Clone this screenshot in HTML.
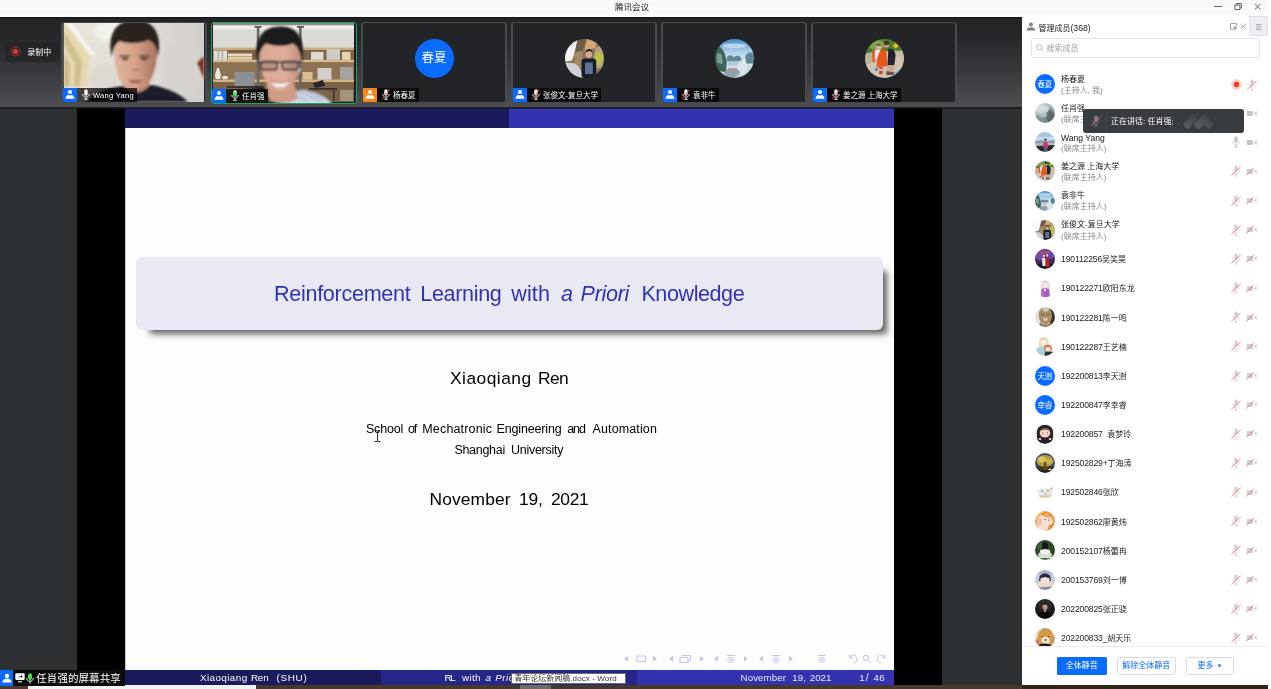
<!DOCTYPE html>
<html lang="zh-CN">
<head>
<meta charset="utf-8">
<title>腾讯会议</title>
<style>
*{box-sizing:border-box;margin:0;padding:0}
html,body{width:1271px;height:689px;overflow:hidden;background:#2d3033}
body{position:relative;font-family:"Liberation Sans","Noto Sans CJK SC",sans-serif;color:#000;font-size:8px}
#root{position:absolute;left:0;top:0;width:1271px;height:689px;overflow:hidden;will-change:transform}
.abs{position:absolute}
svg{display:block;overflow:visible}
#titlebar{left:0;top:0;width:1268px;height:17px;background:#f9f9f9;border-bottom:2px solid #fff}
#titlebar .t{position:absolute;left:0;width:1264px;top:1px;text-align:center;font-size:8.5px;line-height:12px;color:#222}
#strip{left:0;top:17px;width:1022px;height:90px;background:linear-gradient(#0e0f11 0,#222426 2%,#25272a 20%,#37393c 60%,#4c4e51 100%)}
#main{left:0;top:107px;width:1022px;height:578px;background:#2d3033}
#share{left:77px;top:108px;width:865px;height:577px;background:#000}
#slide{left:125px;top:108px;width:769px;height:577px;background:#fdfdfd;overflow:hidden}
#desk{left:0;top:685px;width:1271px;height:4px;background:#2a211b}
#sep{display:none}
#panel{left:1022px;top:16px;width:249px;height:669px;background:#fff;overflow:hidden}
.tile{position:absolute;top:22px;width:146px;height:82px;border:solid #484a4d;border-width:1px 2px 2px 2px;border-radius:3px;background:#232427;overflow:hidden}
.tile .lab{position:absolute;left:0;bottom:0;height:14px;display:flex}
.tile .ico{width:14px;height:14px;background:#0a6cff;position:relative;flex:none}
.tile .nm{height:14px;background:rgba(0,0,0,.72);color:#fff;font-size:7.5px;line-height:14px;padding:0 3px 0 4.500px;display:flex;align-items:center;white-space:nowrap}
.tile .nm svg{margin-right:3.500px;position:relative;top:-0.600px}
.tile .nm span{position:relative;top:1.300px}
.tile .av{position:absolute;left:51.500px;top:15.500px;width:39px;height:39px;border-radius:50%;overflow:hidden}
.w{position:absolute;white-space:pre;line-height:1}
</style>
</head>
<body>
<div id="root">
<svg class="abs" width="0" height="0" style="left:0;top:0"><defs><filter id="avb" x="-5%" y="-5%" width="110%" height="110%"><feGaussianBlur stdDeviation="0.7"/></filter><filter id="avb2" x="-5%" y="-5%" width="110%" height="110%"><feGaussianBlur stdDeviation="1.2"/></filter></defs></svg><div id="titlebar" class="abs"><div class="t">腾讯会议</div><svg class="abs" style="left:1210px;top:0" width="58" height="15" viewBox="0 0 58 15"><path d="M4 6.500 H12" stroke="#555" stroke-width="0.9"/><path d="M24.900 5 H29.900 V9.600 H24.900 Z" stroke="#555" stroke-width="0.9" fill="none"/><path d="M26.400 5 V3.500 H31.400 V8.100 H29.900" stroke="#555" stroke-width="0.9" fill="none"/><path d="M44.900 3.700 L50.700 9.600 M50.700 3.700 L44.900 9.600" stroke="#555" stroke-width="0.9"/></svg></div><div id="strip" class="abs"></div><div id="main" class="abs"></div><div id="share" class="abs"></div><div class="abs" style="left:5px;top:42px;width:55px;height:20px;border-radius:3px;background:rgba(30,31,33,.55)"></div><svg class="abs" style="left:10px;top:46px" width="11" height="11" viewBox="0 0 11 11"><circle cx="5.5" cy="5.5" r="4.5" fill="none" stroke="#b8352d" stroke-width="0.8"/><circle cx="5.5" cy="5.5" r="2.7" fill="#cf3a31"/></svg><div class="w" style="left:27.300px;top:49px;font-size:8px;color:#fff">录制中</div><div class="tile" style="left:61px;"><svg class="abs" style="left:0.500px;top:0" width="140" height="79" viewBox="0 0 140 79" preserveAspectRatio="none">
<defs><filter id="b1" x="-10%" y="-10%" width="120%" height="120%"><feGaussianBlur stdDeviation="0.9"/></filter><filter id="b1b" x="-20%" y="-20%" width="140%" height="140%"><feGaussianBlur stdDeviation="2.5"/></filter>
<linearGradient id="w1" x1="0" x2="1"><stop offset="0" stop-color="#e9e5da"/><stop offset="0.45" stop-color="#e2dfda"/><stop offset="1" stop-color="#d2cfca"/></linearGradient>
<linearGradient id="sk1" x1="0" x2="1"><stop offset="0" stop-color="#e2b8a0"/><stop offset="0.5" stop-color="#d3a088"/><stop offset="1" stop-color="#a8735f"/></linearGradient></defs>
<rect width="140" height="79" fill="url(#w1)"/>
<g filter="url(#b1b)"><ellipse cx="52" cy="8" rx="22" ry="12" fill="#f4f3ee"/><ellipse cx="118" cy="44" rx="20" ry="30" fill="#d6d3ce"/><ellipse cx="40" cy="56" rx="14" ry="14" fill="#dcd8d2"/></g>
<g filter="url(#b1)">
<path d="M0 0 H1 L27 33 L25 36 L24 64 L0 64 Z" fill="#e6d8b2"/><path d="M1 0 H8 L31 32 L27 33 Z" fill="#f6f5f0"/>
<path d="M0 8 L18 38 L16 64 L10 64 L11 40 L0 22 Z" fill="#d2bf90"/>
<path d="M0 30 L6 42 L5 64 L0 64 Z" fill="#cdb98a"/>
<path d="M22 79 C30 70 44 65 58 63 L88 62 C104 65 118 72 124 79 Z" fill="#1a1f2a"/>
<path d="M58 62 L62 54 H82 L86 62 C78 72 66 72 58 62 Z" fill="#b98671"/>
<path d="M50 30 C46 10 56 -2 71 -2 C88 -2 96 10 93 32 C92 46 88 57 82 63 C76 68 66 68 60 63 C54 57 51 46 50 30 Z" fill="url(#sk1)"/>
<path d="M48 34 C43 14 50 -3 71 -3 C92 -3 98 14 94 34 C93 24 90 19 84 17 C76 21 62 21 56 18 C51 21 49 26 48 34 Z" fill="#29211e"/>
<path d="M55 33 H66 M75 33 H86" stroke="#3a2a25" stroke-width="1.300"/>
<ellipse cx="61" cy="36" rx="3.500" ry="1.200" fill="#3d2c28"/><ellipse cx="80" cy="36" rx="3.500" ry="1.200" fill="#3d2c28"/>
<path d="M68 47 H74" stroke="#9a6b58" stroke-width="1.200"/>
<ellipse cx="71" cy="58.500" rx="6.500" ry="1.600" fill="#a25e5a"/>
<path d="M140 33 L133 40 L136 46 L140 56 Z" fill="#7d3328"/>
</g></svg><div class="lab"><div class="ico" style="background:#0a6cff"><svg class="abs" style="left:2px;top:1.400px" width="10" height="10" viewBox="0 0 10 10"><circle cx="5" cy="3" r="2.100" fill="#fff"/><path d="M0.500 9.700 C0.700 7.200 2.300 6.300 3.500 5.700 L5 6.700 L6.500 5.700 C7.700 6.300 9.300 7.200 9.500 9.700 Z" fill="#fff"/></svg></div><div class="nm"><svg width="8" height="11" viewBox="0 0 8 11"><rect x="2.3" y="0.3" width="3.4" height="6.4" rx="1.7" fill="#fff"/><path d="M0.8 5 C0.8 9.2 7.2 9.2 7.2 5" fill="none" stroke="#fff" stroke-width="0.9"/><path d="M4 8.2 V10.2 M2.3 10.3 H5.7" stroke="#fff" stroke-width="0.9" fill="none"/></svg><span style="letter-spacing:0.3px">Wang Yang</span></div></div></div><div class="tile" style="left:211px;border-color:#1aa65e;border-width:1px;padding:0 1px 1px 1px;background:#1c1d1f;"><svg class="abs" style="left:0.500px;top:0" width="141" height="79" viewBox="0 0 141 79" preserveAspectRatio="none">
<defs><filter id="b2" x="-10%" y="-10%" width="120%" height="120%"><feGaussianBlur stdDeviation="0.8"/></filter><filter id="b2s" x="-10%" y="-10%" width="120%" height="120%"><feGaussianBlur stdDeviation="0.45"/></filter>
<linearGradient id="sk2" x1="0" x2="1"><stop offset="0" stop-color="#d9a893"/><stop offset="0.6" stop-color="#dfae9b"/><stop offset="1" stop-color="#c48e7c"/></linearGradient></defs>
<rect width="141" height="79" fill="#b19a78"/>
<g filter="url(#b2s)">
<rect width="141" height="25" fill="#dcdad5"/><rect width="141" height="2.500" fill="#8f8b85"/><rect y="2.500" width="141" height="4" fill="#f0eeea"/>
<rect x="0" y="24.500" width="141" height="2.500" fill="#c9ab7f"/>
<rect x="0" y="27" width="141" height="10" fill="#7d6346"/>
<rect x="0" y="36.800" width="141" height="2.400" fill="#d6ba8e"/>
<rect x="0" y="39.200" width="141" height="17.500" fill="#8d7253"/>
<rect x="0" y="56.700" width="141" height="2.300" fill="#cfb288"/>
<rect x="0" y="59" width="141" height="20" fill="#7c6447"/>
<rect x="43.800" y="3.500" width="2.600" height="76" fill="#6b6865"/><rect x="86" y="3.500" width="2.600" height="76" fill="#6b6865"/>
<rect x="41.500" y="3" width="7" height="1.800" fill="#5e5b58"/><rect x="84" y="3" width="7" height="1.800" fill="#5e5b58"/>
<rect x="0.500" y="27.500" width="4.300" height="9.500" fill="#dedcd6"/><rect x="5.200" y="27.500" width="4.300" height="9.500" fill="#d5d3cd"/><rect x="9.900" y="27.500" width="4.300" height="9.500" fill="#dedcd6"/>
<rect x="15" y="30.500" width="24" height="3" fill="#ead9b6"/><rect x="15" y="33.800" width="24" height="3" fill="#dfcca6"/>
<rect x="98" y="28.800" width="12.500" height="8" fill="#dedbd4"/><rect x="113.500" y="26.200" width="13.500" height="10.600" fill="#d0cdc7"/><rect x="129" y="28.800" width="8.500" height="8" fill="#e3d2ac"/>
<rect x="104.500" y="45" width="14" height="11.700" fill="#d3d0ca"/><rect x="127" y="44" width="13" height="12.700" fill="#a6a39e"/><rect x="89.500" y="49" width="10" height="7.700" fill="#d8c08f"/>
<rect x="21.500" y="49" width="20" height="14" fill="#8c9095"/>
<path d="M3 56 C1 52 3 50 4 45 H6 C7 50 9 52 7 56 Z" fill="#efebe2"/><ellipse cx="12" cy="54.500" rx="3" ry="1.800" fill="#ebe7dd"/>
<rect x="96" y="65" width="28" height="1.800" fill="#34312f"/><path d="M100 60 L110 57 L112 63 L102 65 Z" fill="#262525"/><rect x="120" y="66" width="1.500" height="12" fill="#34312f"/>
<rect x="127" y="67" width="13" height="11" fill="#a39680"/>
<rect x="14" y="63" width="36" height="2" fill="#3a3633"/>
</g>
<g filter="url(#b2)">
<g transform="translate(67 40.5) scale(0.93 0.95) translate(-66.6 -40)">
<path d="M66 84 C70 74 80 68 92 68 C108 70 118 76 124 84 Z" fill="#cdd5e6"/>
<path d="M84 68 L110 79 M92 67 L114 77 M78 72 L96 79" stroke="#8d9cc0" stroke-width="1" fill="none"/>
<path d="M12 79 C16 70 34 65 48 64 L62 79 Z" fill="#202226"/>
<path d="M52 62 H82 L86 76 C76 84 60 84 54 76 Z" fill="#cf9c88"/>
<path d="M45 34 C42 12 52 2 67 2 C82 2 92 12 89 36 C88 50 84 60 78 65 C72 70 62 70 56 65 C50 60 46 50 45 34 Z" fill="url(#sk2)"/>
<path d="M43 40 C37 14 48 1 67 1 C86 1 95 14 90 42 C89 30 87 22 80 19 C72 23 58 22 52 19 C46 23 44 30 43 40 Z" fill="#1f1b1a"/>
<path d="M44.500 38.500 H88.500" stroke="#20222a" stroke-width="2"/>
<rect x="46" y="38" width="17.500" height="8.500" rx="2.200" fill="rgba(90,80,90,.25)" stroke="#20222a" stroke-width="1.700"/><rect x="69" y="38" width="17.500" height="8.500" rx="2.200" fill="rgba(90,80,90,.25)" stroke="#20222a" stroke-width="1.700"/>
<path d="M57 59 C62 61.500 72 61.500 77 58 C74 67 60 67.500 57 59 Z" fill="#f6f2ef"/>
<path d="M56 58.500 C62 61 72 61 78 57.500" stroke="#b0605c" stroke-width="1.100" fill="none"/>
<ellipse cx="87.500" cy="47" rx="1" ry="2.200" fill="#f2f2f2"/>
</g></g></svg><div class="lab"><div class="ico" style="background:#0a6cff"><svg class="abs" style="left:2px;top:1.400px" width="10" height="10" viewBox="0 0 10 10"><circle cx="5" cy="3" r="2.100" fill="#fff"/><path d="M0.500 9.700 C0.700 7.200 2.300 6.300 3.500 5.700 L5 6.700 L6.500 5.700 C7.700 6.300 9.300 7.200 9.500 9.700 Z" fill="#fff"/></svg></div><div class="nm"><svg width="8" height="11" viewBox="0 0 8 11"><rect x="2.3" y="0.3" width="3.4" height="6.4" rx="1.7" fill="#fff"/><rect x="2.3" y="2.2" width="3.4" height="4.5" rx="1.6" fill="#2fe04a"/><path d="M0.8 5 C0.8 9.2 7.2 9.2 7.2 5" fill="none" stroke="#fff" stroke-width="0.9"/><path d="M4 8.2 V10.2 M2.3 10.3 H5.7" stroke="#fff" stroke-width="0.9" fill="none"/></svg><span style="letter-spacing:0px">任肖强</span></div></div></div><div class="tile" style="left:361px;"><div class="av" style="background:#0a6cff;color:#fff;font-size:12.5px;line-height:39px;text-align:center">春夏</div><div class="lab"><div class="ico" style="background:#fb8618"><svg class="abs" style="left:2px;top:1.400px" width="10" height="10" viewBox="0 0 10 10"><circle cx="5" cy="3" r="2.100" fill="#fff"/><path d="M0.500 9.700 C0.700 7.200 2.300 6.300 3.500 5.700 L5 6.700 L6.500 5.700 C7.700 6.300 9.300 7.200 9.500 9.700 Z" fill="#fff"/></svg></div><div class="nm"><svg width="8" height="11" viewBox="0 0 8 11"><rect x="2.3" y="0.3" width="3.4" height="6.4" rx="1.7" fill="#fff"/><path d="M0.8 5 C0.8 9.2 7.2 9.2 7.2 5" fill="none" stroke="#fff" stroke-width="0.9"/><path d="M4 8.2 V10.2 M2.3 10.3 H5.7" stroke="#fff" stroke-width="0.9" fill="none"/><path d="M0.3 10.2 L7.7 0.6" stroke="#e8453c" stroke-width="1"/></svg><span style="letter-spacing:0px">杨春夏</span></div></div></div><div class="tile" style="left:511px;"><div class="av"><svg width="39" height="39" viewBox="0 0 40 40"><g filter="url(#avb)"><rect width="40" height="40" fill="#8c765c"/><path d="M0 0 H13 L9 17 L7 22 L0 23 Z" fill="#f3f5f7"/><path d="M13 0 H22 L18 12 L10 16 Z" fill="#6e5a48"/><path d="M22 0 H34 L31 9 L20 13 Z" fill="#d2a876"/><path d="M31 9 L40 6 V30 H30 Z" fill="#b9a184"/><ellipse cx="34" cy="20" rx="4.500" ry="7" fill="#b9c246"/><path d="M0 24 L12 25 L21 40 H0 Z" fill="#cfd1d4"/><path d="M9 14 L18 12 L17 30 L11 26 Z" fill="#a58a66"/><rect x="17" y="20" width="15" height="20" rx="3" fill="#141a29"/><rect x="20.500" y="24" width="8" height="12" fill="#5f7190"/><ellipse cx="24.500" cy="15.500" rx="3.200" ry="4" fill="#d6a78a"/><path d="M21 14 C21 9 28 9 28.500 14 C27 12 23 12 21 14 Z" fill="#1c1a1a"/></g></svg></div><div class="lab"><div class="ico" style="background:#0a6cff"><svg class="abs" style="left:2px;top:1.400px" width="10" height="10" viewBox="0 0 10 10"><circle cx="5" cy="3" r="2.100" fill="#fff"/><path d="M0.500 9.700 C0.700 7.200 2.300 6.300 3.500 5.700 L5 6.700 L6.500 5.700 C7.700 6.300 9.300 7.200 9.500 9.700 Z" fill="#fff"/></svg></div><div class="nm"><svg width="8" height="11" viewBox="0 0 8 11"><rect x="2.3" y="0.3" width="3.4" height="6.4" rx="1.7" fill="#fff"/><path d="M0.8 5 C0.8 9.2 7.2 9.2 7.2 5" fill="none" stroke="#fff" stroke-width="0.9"/><path d="M4 8.2 V10.2 M2.3 10.3 H5.7" stroke="#fff" stroke-width="0.9" fill="none"/><path d="M0.3 10.2 L7.7 0.6" stroke="#e8453c" stroke-width="1"/></svg><span style="letter-spacing:0px">张俊文-复旦大学</span></div></div></div><div class="tile" style="left:661px;"><div class="av"><svg width="39" height="39" viewBox="0 0 40 40"><g filter="url(#avb)"><defs><linearGradient id="g2y" x1="0" x2="0" y1="0" y2="1"><stop offset="0" stop-color="#3f8ccb"/><stop offset="0.3" stop-color="#a9cde6"/><stop offset="0.55" stop-color="#dbe8f0"/><stop offset="1" stop-color="#b5c9d6"/></linearGradient></defs><rect width="40" height="40" fill="url(#g2y)"/><ellipse cx="20" cy="7" rx="12" ry="2.500" fill="#d4e6f3" opacity=".7"/><path d="M0 9 L5 8 C10 12 12 20 12 26 L11 34 L0 32 Z" fill="#3d6656"/><path d="M2 14 L7 16 L8 26 L2 24 Z" fill="#7f9a92"/><path d="M12 19 C14 16 18 16 19 19 C21 17 25 16 27 20 L28 23 H12 Z" fill="#64879a"/><path d="M31 18 C33 13 38 13 40 16 V25 H32 Z" fill="#5f8698"/><path d="M12 23 H28 L26 27 H14 Z" fill="#a9c2d0" opacity=".8"/><ellipse cx="28" cy="29" rx="5" ry="8" fill="#e6eff5" opacity=".6"/><path d="M9 34 L14 30 L22 30 L26 34 L20 40 H12 Z" fill="#8fa3ad"/><path d="M14 30 H22 L21 32 H15 Z" fill="#c98f8a"/></g></svg></div><div class="lab"><div class="ico" style="background:#0a6cff"><svg class="abs" style="left:2px;top:1.400px" width="10" height="10" viewBox="0 0 10 10"><circle cx="5" cy="3" r="2.100" fill="#fff"/><path d="M0.500 9.700 C0.700 7.200 2.300 6.300 3.500 5.700 L5 6.700 L6.500 5.700 C7.700 6.300 9.300 7.200 9.500 9.700 Z" fill="#fff"/></svg></div><div class="nm"><svg width="8" height="11" viewBox="0 0 8 11"><rect x="2.3" y="0.3" width="3.4" height="6.4" rx="1.7" fill="#fff"/><path d="M0.8 5 C0.8 9.2 7.2 9.2 7.2 5" fill="none" stroke="#fff" stroke-width="0.9"/><path d="M4 8.2 V10.2 M2.3 10.3 H5.7" stroke="#fff" stroke-width="0.9" fill="none"/><path d="M0.3 10.2 L7.7 0.6" stroke="#e8453c" stroke-width="1"/></svg><span style="letter-spacing:0px">袁非牛</span></div></div></div><div class="tile" style="left:811px;"><div class="av"><svg width="39" height="39" viewBox="0 0 40 40"><g filter="url(#avb)"><rect width="40" height="40" fill="#cfc4b2"/><path d="M0 0 H40 V14 L26 12 L0 16 Z" fill="#4f7a2f"/><ellipse cx="12" cy="6" rx="9" ry="5" fill="#7da64a"/><path d="M0 15 L8 13 L8 24 L0 27 Z" fill="#b9b39c"/><path d="M30 12 L40 12 V18 H30 Z" fill="#c4bca6"/><path d="M31.500 4 L34.500 7 L31.500 10 L28.500 7 Z" fill="#e6c21f"/><path d="M24 10 C30 9 32 14 31 20 L30 27 L23 27 Z" fill="#20232e"/><ellipse cx="22" cy="5.500" rx="3.200" ry="3.600" fill="#c9987c"/><path d="M19 4 C19 1 25 1 25 4 Z" fill="#3a2c26"/><rect x="19.500" y="4.500" width="5.500" height="1.500" fill="#1a1a1a"/><path d="M23 27 L31 27 L29 35 L22 34 Z" fill="#c9a890"/><path d="M22 33 L30 34 L29 37 H22 Z" fill="#6b5240"/><ellipse cx="14" cy="8" rx="2.800" ry="3" fill="#d9b39a"/><path d="M11.500 7 C11.500 4 16.500 4 16.500 7 Z" fill="#5a4a40"/><path d="M10 11 H17 L18 20 H10 Z" fill="#dfe4ea"/><path d="M10 20 H15 L14 30 H11.500 Z" fill="#d9b39a"/><rect x="10.500" y="30" width="2.500" height="2.500" fill="#2f6fb0"/><path d="M7 12 L10 11 L10 24 L8 24 Z" fill="#e9561f"/><path d="M15 13 C17 9 22 10 22 14 L23 28 L12 29 L13 18 Z" fill="#e9561f"/><rect x="14.500" y="29" width="3.500" height="7" fill="#c9402a"/><rect x="14.500" y="31" width="3.500" height="1.500" fill="#f3e9e4"/><path d="M24 40 L40 28 V40 Z" fill="#7f9fb4"/></g></svg></div><div class="lab"><div class="ico" style="background:#0a6cff"><svg class="abs" style="left:2px;top:1.400px" width="10" height="10" viewBox="0 0 10 10"><circle cx="5" cy="3" r="2.100" fill="#fff"/><path d="M0.500 9.700 C0.700 7.200 2.300 6.300 3.500 5.700 L5 6.700 L6.500 5.700 C7.700 6.300 9.300 7.200 9.500 9.700 Z" fill="#fff"/></svg></div><div class="nm"><svg width="8" height="11" viewBox="0 0 8 11"><rect x="2.3" y="0.3" width="3.4" height="6.4" rx="1.7" fill="#fff"/><path d="M0.8 5 C0.8 9.2 7.2 9.2 7.2 5" fill="none" stroke="#fff" stroke-width="0.9"/><path d="M4 8.2 V10.2 M2.3 10.3 H5.7" stroke="#fff" stroke-width="0.9" fill="none"/><path d="M0.3 10.2 L7.7 0.6" stroke="#e8453c" stroke-width="1"/></svg><span style="letter-spacing:0px">姜之源 上海大学</span></div></div></div><div id="slide" class="abs"><div class="abs" style="left:0;top:20px;width:1px;height:542px;background:#c9c9c9"></div><div class="abs" style="left:0;top:0;width:384px;height:20px;background:#1a1a5c"></div><div class="abs" style="left:384px;top:0;width:385px;height:20px;background:#3333b0"></div><div class="abs" style="left:11px;top:148.700px;width:747px;height:73.700px;border-radius:6px;background:#e9e9f4;box-shadow:8.700px 8.700px 6px -5.400px rgba(0,0,0,.62)"></div><div class="abs" style="left:0;top:562px;width:256px;height:15px;background:#1a1a5c"></div><div class="abs" style="left:256px;top:562px;width:256px;height:15px;background:#262689"></div><div class="abs" style="left:512px;top:562px;width:257px;height:15px;background:#3333b0"></div></div><div id="sep" class="abs"></div><div id="panel" class="abs"><svg class="abs" style="left:4px;top:6px" width="10" height="9" viewBox="0 0 10 9"><circle cx="5" cy="2.5" r="2" fill="#808080"/><path d="M0.6 8.6 C0.8 5.800 2.6 5.200 5 5.200 C7.4 5.200 9.200 5.800 9.400 8.600 Z" fill="#808080"/></svg><div class="w" style="left:16.5px;top:7.800000000000001px;font-size:8px;color:#222">管理成员<span style="font-size:8.600px">(368)</span></div><svg class="abs" style="left:208px;top:7px" width="17" height="7" viewBox="0 0 17 7"><path d="M6.500 3 V0.5 H0.5 V6.500 H3" fill="none" stroke="#999" stroke-width="0.9"/><rect x="3.400" y="3.400" width="3.200" height="3.200" fill="#aaa"/><path d="M10.500 0.8 L16 6.200 M16 0.8 L10.500 6.200" stroke="#999" stroke-width="0.9"/></svg><div class="abs" style="left:227px;top:0px;width:19px;height:20px;background:#eceef2;border:1px solid #dfe1e6;border-radius:1px"></div><svg class="abs" style="left:233.5px;top:7.5px" width="6" height="6" viewBox="0 0 6 6"><path d="M0 0.700 H5.500 M0 3 H5.500 M0 5.300 H5.500" stroke="#6e6e6e" stroke-width="0.600"/></svg><div class="abs" style="left:9px;top:22px;width:229px;height:19.500px;border:1px solid #e4e4e6;border-radius:2px;background:#fff"></div><svg class="abs" style="left:14px;top:28px" width="8" height="8" viewBox="0 0 8 8"><circle cx="3.200" cy="3.200" r="2.600" fill="none" stroke="#aaa" stroke-width="0.8"/><path d="M5.100 5.100 L7.500 7.500" stroke="#aaa" stroke-width="0.8"/></svg><div class="w" style="left:24.5px;top:28.799999999999997px;font-size:8px;color:#a0a0a0">搜索成员</div><div class="abs" style="left:12.8px;top:58.00px;width:20px;height:20px;border-radius:50%;background:#0a6cff;color:#fff;font-size:7.500px;line-height:21.500px;text-align:center;letter-spacing:-0.2px">春夏</div><div class="w" style="left:39px;top:59.70px;font-size:8px;color:#161616">杨春夏</div><div class="w" style="left:39px;top:70.80px;font-size:8px;color:#8a8a8a">(主持人, 我)</div><svg class="abs" style="left:208.5px;top:62.50px" width="11" height="11" viewBox="0 0 11 11"><circle cx="5.500" cy="5.500" r="4.600" fill="none" stroke="#ff9d97" stroke-width="0.9"/><circle cx="5.500" cy="5.500" r="2.900" fill="#ff3b30"/></svg><div class="abs" style="left:224.79999999999995px;top:62.50px"><svg width="10" height="12" viewBox="0 0 10 12"><rect x="3.200" y="0.600" width="3.600" height="6.200" rx="1.800" fill="#cfd2d6"/><path d="M1.700 5.300 C1.700 9.500 8.300 9.500 8.300 5.300" fill="none" stroke="#cfd2d6" stroke-width="0.8"/><path d="M5 8.600 V10.800 M3.200 11 H6.800" stroke="#cfd2d6" stroke-width="0.9"/><path d="M0.300 10.400 L9.600 1.800" stroke="#ff6f66" stroke-width="0.9"/></svg></div><div class="abs" style="left:12.8px;top:87.15px;width:20px;height:20px;border-radius:50%;overflow:hidden"><svg width="20" height="20" viewBox="0 0 40 40"><g filter="url(#avb2)"><defs><linearGradient id="g4rx" x1="0" x2="1" y1="0" y2="1"><stop offset="0" stop-color="#d3dde1"/><stop offset="0.45" stop-color="#a9b7bb"/><stop offset="1" stop-color="#59696a"/></linearGradient></defs><rect width="40" height="40" fill="url(#g4rx)"/><ellipse cx="14" cy="12" rx="14" ry="8" fill="#d7e0e4" opacity=".8"/><path d="M26 16 L31 12 L36 20 L40 24 V40 H18 L22 26 Z" fill="#4f5f60" opacity=".75"/><path d="M0 26 L12 22 L22 30 L28 40 H0 Z" fill="#7e8d90" opacity=".8"/><ellipse cx="16" cy="24" rx="8" ry="5" fill="#b9c6ca" opacity=".8"/></g></svg></div><div class="w" style="left:39px;top:88.85px;font-size:8px;color:#161616">任肖强</div><div class="w" style="left:39px;top:99.95px;font-size:8px;color:#8a8a8a">(联席主持人)</div><div class="abs" style="left:224px;top:92.65px"><svg width="11" height="9" viewBox="0 0 11 9"><rect x="0.800" y="1.900" width="6.200" height="5.200" rx="0.500" fill="#c3c5c9"/><path d="M7.900 4.500 L10.700 2.100 V6.900 Z" fill="#c3c5c9"/></svg></div><div class="abs" style="left:12.8px;top:116.30px;width:20px;height:20px;border-radius:50%;overflow:hidden"><svg width="20" height="20" viewBox="0 0 40 40"><g filter="url(#avb2)"><rect width="40" height="40" fill="#c9dcee"/><rect width="40" height="10" fill="#a8c6e6"/><path d="M0 18 L12 16 L24 18 L40 15 V26 H0 Z" fill="#8ea3b8"/><rect y="22" width="40" height="6" fill="#aebfce"/><path d="M0 28 L40 26 V40 H0 Z" fill="#2a2a28"/><path d="M2 20 V30 M8 20 V30 M14 20 V30 M0 21 H18" stroke="#7d8790" stroke-width="0.8"/><path d="M17 20 H25 L26 32 H17 Z" fill="#c9386b"/><ellipse cx="21" cy="16.500" rx="2.600" ry="3" fill="#a87860"/><path d="M18.300 15.500 C18.300 12.500 23.700 12.500 23.700 15.500 Z" fill="#1e1a1a"/><rect x="18" y="32" width="7" height="8" fill="#3f5f8f"/></g></svg></div><div class="w" style="left:39px;top:118.00px;font-size:8px;color:#161616"><span style="font-size:8.600px;letter-spacing:0px">Wang Yang</span></div><div class="w" style="left:39px;top:129.10px;font-size:8px;color:#8a8a8a">(联席主持人)</div><div class="abs" style="left:209px;top:120.30px"><svg width="10" height="12" viewBox="0 0 10 12"><rect x="3.200" y="0.600" width="3.600" height="6.200" rx="1.800" fill="#c3c5c9"/><path d="M1.700 5.300 C1.700 9.500 8.300 9.500 8.300 5.300" fill="none" stroke="#c3c5c9" stroke-width="0.8"/><path d="M5 8.600 V10.800 M3.200 11 H6.800" stroke="#c3c5c9" stroke-width="0.9"/></svg></div><div class="abs" style="left:224px;top:121.80px"><svg width="11" height="9" viewBox="0 0 11 9"><rect x="0.800" y="1.900" width="6.200" height="5.200" rx="0.500" fill="#c3c5c9"/><path d="M7.900 4.500 L10.700 2.100 V6.900 Z" fill="#c3c5c9"/></svg></div><div class="abs" style="left:12.8px;top:145.45px;width:20px;height:20px;border-radius:50%;overflow:hidden"><svg width="20" height="20" viewBox="0 0 40 40"><g filter="url(#avb2)"><rect width="40" height="40" fill="#cfc4b2"/><path d="M0 0 H40 V14 L26 12 L0 16 Z" fill="#4f7a2f"/><ellipse cx="12" cy="6" rx="9" ry="5" fill="#7da64a"/><path d="M0 15 L8 13 L8 24 L0 27 Z" fill="#b9b39c"/><path d="M30 12 L40 12 V18 H30 Z" fill="#c4bca6"/><path d="M31.500 4 L34.500 7 L31.500 10 L28.500 7 Z" fill="#e6c21f"/><path d="M24 10 C30 9 32 14 31 20 L30 27 L23 27 Z" fill="#20232e"/><ellipse cx="22" cy="5.500" rx="3.200" ry="3.600" fill="#c9987c"/><path d="M19 4 C19 1 25 1 25 4 Z" fill="#3a2c26"/><rect x="19.500" y="4.500" width="5.500" height="1.500" fill="#1a1a1a"/><path d="M23 27 L31 27 L29 35 L22 34 Z" fill="#c9a890"/><path d="M22 33 L30 34 L29 37 H22 Z" fill="#6b5240"/><ellipse cx="14" cy="8" rx="2.800" ry="3" fill="#d9b39a"/><path d="M11.500 7 C11.500 4 16.500 4 16.500 7 Z" fill="#5a4a40"/><path d="M10 11 H17 L18 20 H10 Z" fill="#dfe4ea"/><path d="M10 20 H15 L14 30 H11.500 Z" fill="#d9b39a"/><rect x="10.500" y="30" width="2.500" height="2.500" fill="#2f6fb0"/><path d="M7 12 L10 11 L10 24 L8 24 Z" fill="#e9561f"/><path d="M15 13 C17 9 22 10 22 14 L23 28 L12 29 L13 18 Z" fill="#e9561f"/><rect x="14.500" y="29" width="3.500" height="7" fill="#c9402a"/><rect x="14.500" y="31" width="3.500" height="1.500" fill="#f3e9e4"/><path d="M24 40 L40 28 V40 Z" fill="#7f9fb4"/></g></svg></div><div class="w" style="left:39px;top:147.15px;font-size:8px;color:#161616">姜之源 上海大学</div><div class="w" style="left:39px;top:158.25px;font-size:8px;color:#8a8a8a">(联席主持人)</div><div class="abs" style="left:209px;top:149.45px"><svg width="10" height="12" viewBox="0 0 10 12"><rect x="3.200" y="0.600" width="3.600" height="6.200" rx="1.800" fill="#cfd2d6"/><path d="M1.700 5.300 C1.700 9.500 8.300 9.500 8.300 5.300" fill="none" stroke="#cfd2d6" stroke-width="0.8"/><path d="M5 8.600 V10.800 M3.200 11 H6.800" stroke="#cfd2d6" stroke-width="0.9"/><path d="M0.300 10.400 L9.600 1.800" stroke="#ff6f66" stroke-width="0.9"/></svg></div><div class="abs" style="left:224px;top:150.95px"><svg width="11" height="9" viewBox="0 0 11 9"><rect x="0.800" y="1.900" width="6.200" height="5.200" rx="0.500" fill="#cfd2d6"/><path d="M7.900 4.500 L10.700 2.100 V6.900 Z" fill="#cfd2d6"/><path d="M0.300 8.400 L7.900 1.100" stroke="#ff6f66" stroke-width="0.9"/></svg></div><div class="abs" style="left:12.8px;top:174.60px;width:20px;height:20px;border-radius:50%;overflow:hidden"><svg width="20" height="20" viewBox="0 0 40 40"><g filter="url(#avb2)"><defs><linearGradient id="g7y" x1="0" x2="0" y1="0" y2="1"><stop offset="0" stop-color="#3f8ccb"/><stop offset="0.3" stop-color="#a9cde6"/><stop offset="0.55" stop-color="#dbe8f0"/><stop offset="1" stop-color="#b5c9d6"/></linearGradient></defs><rect width="40" height="40" fill="url(#g7y)"/><ellipse cx="20" cy="7" rx="12" ry="2.500" fill="#d4e6f3" opacity=".7"/><path d="M0 9 L5 8 C10 12 12 20 12 26 L11 34 L0 32 Z" fill="#3d6656"/><path d="M2 14 L7 16 L8 26 L2 24 Z" fill="#7f9a92"/><path d="M12 19 C14 16 18 16 19 19 C21 17 25 16 27 20 L28 23 H12 Z" fill="#64879a"/><path d="M31 18 C33 13 38 13 40 16 V25 H32 Z" fill="#5f8698"/><path d="M12 23 H28 L26 27 H14 Z" fill="#a9c2d0" opacity=".8"/><ellipse cx="28" cy="29" rx="5" ry="8" fill="#e6eff5" opacity=".6"/><path d="M9 34 L14 30 L22 30 L26 34 L20 40 H12 Z" fill="#8fa3ad"/><path d="M14 30 H22 L21 32 H15 Z" fill="#c98f8a"/></g></svg></div><div class="w" style="left:39px;top:176.30px;font-size:8px;color:#161616">袁非牛</div><div class="w" style="left:39px;top:187.40px;font-size:8px;color:#8a8a8a">(联席主持人)</div><div class="abs" style="left:209px;top:178.60px"><svg width="10" height="12" viewBox="0 0 10 12"><rect x="3.200" y="0.600" width="3.600" height="6.200" rx="1.800" fill="#cfd2d6"/><path d="M1.700 5.300 C1.700 9.500 8.300 9.500 8.300 5.300" fill="none" stroke="#cfd2d6" stroke-width="0.8"/><path d="M5 8.600 V10.800 M3.200 11 H6.800" stroke="#cfd2d6" stroke-width="0.9"/><path d="M0.300 10.400 L9.600 1.800" stroke="#ff6f66" stroke-width="0.9"/></svg></div><div class="abs" style="left:224px;top:180.10px"><svg width="11" height="9" viewBox="0 0 11 9"><rect x="0.800" y="1.900" width="6.200" height="5.200" rx="0.500" fill="#cfd2d6"/><path d="M7.900 4.500 L10.700 2.100 V6.900 Z" fill="#cfd2d6"/><path d="M0.300 8.400 L7.900 1.100" stroke="#ff6f66" stroke-width="0.9"/></svg></div><div class="abs" style="left:12.8px;top:203.75px;width:20px;height:20px;border-radius:50%;overflow:hidden"><svg width="20" height="20" viewBox="0 0 40 40"><g filter="url(#avb2)"><rect width="40" height="40" fill="#8c765c"/><path d="M0 0 H13 L9 17 L7 22 L0 23 Z" fill="#f3f5f7"/><path d="M13 0 H22 L18 12 L10 16 Z" fill="#6e5a48"/><path d="M22 0 H34 L31 9 L20 13 Z" fill="#d2a876"/><path d="M31 9 L40 6 V30 H30 Z" fill="#b9a184"/><ellipse cx="34" cy="20" rx="4.500" ry="7" fill="#b9c246"/><path d="M0 24 L12 25 L21 40 H0 Z" fill="#cfd1d4"/><path d="M9 14 L18 12 L17 30 L11 26 Z" fill="#a58a66"/><rect x="17" y="20" width="15" height="20" rx="3" fill="#141a29"/><rect x="20.500" y="24" width="8" height="12" fill="#5f7190"/><ellipse cx="24.500" cy="15.500" rx="3.200" ry="4" fill="#d6a78a"/><path d="M21 14 C21 9 28 9 28.500 14 C27 12 23 12 21 14 Z" fill="#1c1a1a"/></g></svg></div><div class="w" style="left:39px;top:205.45px;font-size:8px;color:#161616">张俊文-复旦大学</div><div class="w" style="left:39px;top:216.55px;font-size:8px;color:#8a8a8a">(联席主持人)</div><div class="abs" style="left:209px;top:207.75px"><svg width="10" height="12" viewBox="0 0 10 12"><rect x="3.200" y="0.600" width="3.600" height="6.200" rx="1.800" fill="#cfd2d6"/><path d="M1.700 5.300 C1.700 9.500 8.300 9.500 8.300 5.300" fill="none" stroke="#cfd2d6" stroke-width="0.8"/><path d="M5 8.600 V10.800 M3.200 11 H6.800" stroke="#cfd2d6" stroke-width="0.9"/><path d="M0.300 10.400 L9.600 1.800" stroke="#ff6f66" stroke-width="0.9"/></svg></div><div class="abs" style="left:224px;top:209.25px"><svg width="11" height="9" viewBox="0 0 11 9"><rect x="0.800" y="1.900" width="6.200" height="5.200" rx="0.500" fill="#cfd2d6"/><path d="M7.900 4.500 L10.700 2.100 V6.900 Z" fill="#cfd2d6"/><path d="M0.300 8.400 L7.900 1.100" stroke="#ff6f66" stroke-width="0.9"/></svg></div><div class="abs" style="left:12.8px;top:232.90px;width:20px;height:20px;border-radius:50%;overflow:hidden"><svg width="20" height="20" viewBox="0 0 40 40"><g filter="url(#avb2)"><rect width="40" height="40" fill="#3a2a5a"/><ellipse cx="10" cy="14" rx="9" ry="9" fill="#7a4aa8"/><ellipse cx="31" cy="12" rx="8" ry="8" fill="#5a4ab0"/><ellipse cx="20" cy="6" rx="10" ry="4" fill="#c05a9a" opacity=".7"/><path d="M0 30 H40 V40 H0 Z" fill="#1c1626"/><ellipse cx="18" cy="14" rx="2.500" ry="2.800" fill="#e6c3b0"/><ellipse cx="24" cy="13" rx="2.500" ry="2.800" fill="#e0b8a4"/><path d="M14 18 H21 L21 34 H15 Z" fill="#f0ece8"/><path d="M21 17 H28 L29 36 H22 Z" fill="#c21f2e"/><path d="M22.500 10.500 H26 V12 H22.500 Z" fill="#d8b23a"/></g></svg></div><div class="w" style="left:39px;top:239.20px;font-size:8px;color:#1c1c1c"><span style="font-size:8.600px;letter-spacing:-0.15px">190112256</span>吴笑昊</div><div class="abs" style="left:209px;top:236.90px"><svg width="10" height="12" viewBox="0 0 10 12"><rect x="3.200" y="0.600" width="3.600" height="6.200" rx="1.800" fill="#cfd2d6"/><path d="M1.700 5.300 C1.700 9.500 8.300 9.500 8.300 5.300" fill="none" stroke="#cfd2d6" stroke-width="0.8"/><path d="M5 8.600 V10.800 M3.200 11 H6.800" stroke="#cfd2d6" stroke-width="0.9"/><path d="M0.300 10.400 L9.600 1.800" stroke="#ff6f66" stroke-width="0.9"/></svg></div><div class="abs" style="left:224px;top:238.40px"><svg width="11" height="9" viewBox="0 0 11 9"><rect x="0.800" y="1.900" width="6.200" height="5.200" rx="0.500" fill="#cfd2d6"/><path d="M7.900 4.500 L10.700 2.100 V6.900 Z" fill="#cfd2d6"/><path d="M0.300 8.400 L7.900 1.100" stroke="#ff6f66" stroke-width="0.9"/></svg></div><div class="abs" style="left:12.8px;top:262.05px;width:20px;height:20px;border-radius:50%;overflow:hidden"><svg width="20" height="20" viewBox="0 0 40 40"><g filter="url(#avb2)"><rect width="40" height="40" fill="#fff"/><path d="M12 12 C12 2 28 2 29 12 L31 26 L25 22 L15 22 L11 27 Z" fill="#e6e0e4"/><ellipse cx="20" cy="13" rx="5.500" ry="6" fill="#f6e6e0"/><path d="M13 10 C15 4 25 4 27 10 C23 8 17 8 13 10 Z" fill="#d9d2d8"/><path d="M13 22 C16 20 25 20 28 22 L30 36 C26 39 16 39 12 36 Z" fill="#a95cc0"/><path d="M17 22 L20 28 L23 22 Z" fill="#f2e4dc"/><path d="M14 26 L18 30 L16 36 L12 34 Z" fill="#c07ad2"/></g></svg></div><div class="w" style="left:39px;top:268.35px;font-size:8px;color:#1c1c1c"><span style="font-size:8.600px;letter-spacing:-0.15px">190122271</span>欧阳东龙</div><div class="abs" style="left:209px;top:266.05px"><svg width="10" height="12" viewBox="0 0 10 12"><rect x="3.200" y="0.600" width="3.600" height="6.200" rx="1.800" fill="#cfd2d6"/><path d="M1.700 5.300 C1.700 9.500 8.300 9.500 8.300 5.300" fill="none" stroke="#cfd2d6" stroke-width="0.8"/><path d="M5 8.600 V10.800 M3.200 11 H6.800" stroke="#cfd2d6" stroke-width="0.9"/><path d="M0.300 10.400 L9.600 1.800" stroke="#ff6f66" stroke-width="0.9"/></svg></div><div class="abs" style="left:224px;top:267.55px"><svg width="11" height="9" viewBox="0 0 11 9"><rect x="0.800" y="1.900" width="6.200" height="5.200" rx="0.500" fill="#cfd2d6"/><path d="M7.900 4.500 L10.700 2.100 V6.900 Z" fill="#cfd2d6"/><path d="M0.300 8.400 L7.900 1.100" stroke="#ff6f66" stroke-width="0.9"/></svg></div><div class="abs" style="left:12.8px;top:291.20px;width:20px;height:20px;border-radius:50%;overflow:hidden"><svg width="20" height="20" viewBox="0 0 40 40"><g filter="url(#avb2)"><rect width="40" height="40" fill="#cfc8bc"/><path d="M0 0 H12 V40 H0 Z" fill="#e8e4dc"/><path d="M28 0 H40 V40 H30 Z" fill="#3a332c"/><path d="M8 10 L13 2 L17 9 L25 9 L30 2 L33 12 C36 22 31 34 21 35 C10 34 6 22 8 10 Z" fill="#a98d66"/><path d="M13 14 L18 16 M29 14 L24 16" stroke="#3a2c1e" stroke-width="1.300"/><ellipse cx="21" cy="24" rx="5" ry="4" fill="#d9c8ae"/><path d="M19.500 21 H22.500 L21 23 Z" fill="#6a4a3a"/><path d="M10 30 C14 38 28 38 32 30 L34 40 H8 Z" fill="#8f7652"/></g></svg></div><div class="w" style="left:39px;top:297.50px;font-size:8px;color:#1c1c1c"><span style="font-size:8.600px;letter-spacing:-0.15px">190122281</span>陈一鸣</div><div class="abs" style="left:209px;top:295.20px"><svg width="10" height="12" viewBox="0 0 10 12"><rect x="3.200" y="0.600" width="3.600" height="6.200" rx="1.800" fill="#cfd2d6"/><path d="M1.700 5.300 C1.700 9.500 8.300 9.500 8.300 5.300" fill="none" stroke="#cfd2d6" stroke-width="0.8"/><path d="M5 8.600 V10.800 M3.200 11 H6.800" stroke="#cfd2d6" stroke-width="0.9"/><path d="M0.300 10.400 L9.600 1.800" stroke="#ff6f66" stroke-width="0.9"/></svg></div><div class="abs" style="left:224px;top:296.70px"><svg width="11" height="9" viewBox="0 0 11 9"><rect x="0.800" y="1.900" width="6.200" height="5.200" rx="0.500" fill="#cfd2d6"/><path d="M7.900 4.500 L10.700 2.100 V6.900 Z" fill="#cfd2d6"/><path d="M0.300 8.400 L7.900 1.100" stroke="#ff6f66" stroke-width="0.9"/></svg></div><div class="abs" style="left:12.8px;top:320.35px;width:20px;height:20px;border-radius:50%;overflow:hidden"><svg width="20" height="20" viewBox="0 0 40 40"><g filter="url(#avb2)"><rect width="40" height="40" fill="#fff"/><ellipse cx="13" cy="30" rx="11" ry="9" fill="#a9d4dc"/><path d="M8 8 C10 0 26 0 27 10 L28 20 L8 22 Z" fill="#e8dcc0"/><ellipse cx="17" cy="12" rx="6" ry="6.500" fill="#fbeee6"/><path d="M9 10 C12 2 22 2 25 9 C20 7 14 7 9 10 Z" fill="#dcd0b0"/><path d="M18 22 C20 16 32 16 34 24 L33 30 L19 30 Z" fill="#e4682a"/><ellipse cx="26" cy="26" rx="5.500" ry="5.500" fill="#fbe8dc"/><path d="M19 24 C21 17 32 17 34 25 C30 21 23 21 19 24 Z" fill="#e4682a"/><path d="M20 31 H33 L34 40 H19 Z" fill="#2c3a34"/><path d="M30 34 L38 30 L37 36 Z" fill="#1e2420"/></g></svg></div><div class="w" style="left:39px;top:326.65px;font-size:8px;color:#1c1c1c"><span style="font-size:8.600px;letter-spacing:-0.15px">190122287</span>王艺楠</div><div class="abs" style="left:209px;top:324.35px"><svg width="10" height="12" viewBox="0 0 10 12"><rect x="3.200" y="0.600" width="3.600" height="6.200" rx="1.800" fill="#cfd2d6"/><path d="M1.700 5.300 C1.700 9.500 8.300 9.500 8.300 5.300" fill="none" stroke="#cfd2d6" stroke-width="0.8"/><path d="M5 8.600 V10.800 M3.200 11 H6.800" stroke="#cfd2d6" stroke-width="0.9"/><path d="M0.300 10.400 L9.600 1.800" stroke="#ff6f66" stroke-width="0.9"/></svg></div><div class="abs" style="left:224px;top:325.85px"><svg width="11" height="9" viewBox="0 0 11 9"><rect x="0.800" y="1.900" width="6.200" height="5.200" rx="0.500" fill="#cfd2d6"/><path d="M7.900 4.500 L10.700 2.100 V6.900 Z" fill="#cfd2d6"/><path d="M0.300 8.400 L7.900 1.100" stroke="#ff6f66" stroke-width="0.9"/></svg></div><div class="abs" style="left:12.8px;top:349.50px;width:20px;height:20px;border-radius:50%;background:#0a6cff;color:#fff;font-size:7.500px;line-height:21.500px;text-align:center;letter-spacing:-0.2px">天澍</div><div class="w" style="left:39px;top:355.80px;font-size:8px;color:#1c1c1c"><span style="font-size:8.600px;letter-spacing:-0.15px">192200813</span>李天澍</div><div class="abs" style="left:209px;top:353.50px"><svg width="10" height="12" viewBox="0 0 10 12"><rect x="3.200" y="0.600" width="3.600" height="6.200" rx="1.800" fill="#cfd2d6"/><path d="M1.700 5.300 C1.700 9.500 8.300 9.500 8.300 5.300" fill="none" stroke="#cfd2d6" stroke-width="0.8"/><path d="M5 8.600 V10.800 M3.200 11 H6.800" stroke="#cfd2d6" stroke-width="0.9"/><path d="M0.300 10.400 L9.600 1.800" stroke="#ff6f66" stroke-width="0.9"/></svg></div><div class="abs" style="left:224px;top:355.00px"><svg width="11" height="9" viewBox="0 0 11 9"><rect x="0.800" y="1.900" width="6.200" height="5.200" rx="0.500" fill="#cfd2d6"/><path d="M7.900 4.500 L10.700 2.100 V6.900 Z" fill="#cfd2d6"/><path d="M0.300 8.400 L7.900 1.100" stroke="#ff6f66" stroke-width="0.9"/></svg></div><div class="abs" style="left:12.8px;top:378.65px;width:20px;height:20px;border-radius:50%;background:#0a6cff;color:#fff;font-size:7.500px;line-height:21.500px;text-align:center;letter-spacing:-0.2px">幸睿</div><div class="w" style="left:39px;top:384.95px;font-size:8px;color:#1c1c1c"><span style="font-size:8.600px;letter-spacing:-0.15px">192200847</span>李幸睿</div><div class="abs" style="left:209px;top:382.65px"><svg width="10" height="12" viewBox="0 0 10 12"><rect x="3.200" y="0.600" width="3.600" height="6.200" rx="1.800" fill="#cfd2d6"/><path d="M1.700 5.300 C1.700 9.500 8.300 9.500 8.300 5.300" fill="none" stroke="#cfd2d6" stroke-width="0.8"/><path d="M5 8.600 V10.800 M3.200 11 H6.800" stroke="#cfd2d6" stroke-width="0.9"/><path d="M0.300 10.400 L9.600 1.800" stroke="#ff6f66" stroke-width="0.9"/></svg></div><div class="abs" style="left:224px;top:384.15px"><svg width="11" height="9" viewBox="0 0 11 9"><rect x="0.800" y="1.900" width="6.200" height="5.200" rx="0.500" fill="#cfd2d6"/><path d="M7.900 4.500 L10.700 2.100 V6.900 Z" fill="#cfd2d6"/><path d="M0.300 8.400 L7.900 1.100" stroke="#ff6f66" stroke-width="0.9"/></svg></div><div class="abs" style="left:12.8px;top:407.80px;width:20px;height:20px;border-radius:50%;overflow:hidden"><svg width="20" height="20" viewBox="0 0 40 40"><g filter="url(#avb2)"><rect width="40" height="40" fill="#eee8e6"/><path d="M4 22 C2 6 12 2 20 2 C28 2 38 6 36 22 C37 32 32 40 20 40 C8 40 3 32 4 22 Z" fill="#2a2426"/><ellipse cx="20" cy="18" rx="10.500" ry="9" fill="#f6d6c6"/><path d="M9 15 C11 6 29 6 31 15 C26 11 14 11 9 15 Z" fill="#8a6a5c"/><ellipse cx="14" cy="21" rx="2" ry="1.300" fill="#f0a8a0"/><ellipse cx="26" cy="21" rx="2" ry="1.300" fill="#f0a8a0"/><circle cx="15.500" cy="17.500" r="1" fill="#2a2020"/><circle cx="24.500" cy="17.500" r="1" fill="#2a2020"/><ellipse cx="10" cy="30" rx="2.500" ry="2.200" fill="#f6e2d8"/><ellipse cx="30" cy="30" rx="2.500" ry="2.200" fill="#f6e2d8"/></g></svg></div><div class="w" style="left:39px;top:414.10px;font-size:8px;color:#1c1c1c"><span style="font-size:8.600px;letter-spacing:-0.15px">192200857  </span>袁梦玲</div><div class="abs" style="left:209px;top:411.80px"><svg width="10" height="12" viewBox="0 0 10 12"><rect x="3.200" y="0.600" width="3.600" height="6.200" rx="1.800" fill="#cfd2d6"/><path d="M1.700 5.300 C1.700 9.500 8.300 9.500 8.300 5.300" fill="none" stroke="#cfd2d6" stroke-width="0.8"/><path d="M5 8.600 V10.800 M3.200 11 H6.800" stroke="#cfd2d6" stroke-width="0.9"/><path d="M0.300 10.400 L9.600 1.800" stroke="#ff6f66" stroke-width="0.9"/></svg></div><div class="abs" style="left:224px;top:413.30px"><svg width="11" height="9" viewBox="0 0 11 9"><rect x="0.800" y="1.900" width="6.200" height="5.200" rx="0.500" fill="#cfd2d6"/><path d="M7.900 4.500 L10.700 2.100 V6.900 Z" fill="#cfd2d6"/><path d="M0.300 8.400 L7.900 1.100" stroke="#ff6f66" stroke-width="0.9"/></svg></div><div class="abs" style="left:12.8px;top:436.95px;width:20px;height:20px;border-radius:50%;overflow:hidden"><svg width="20" height="20" viewBox="0 0 40 40"><g filter="url(#avb2)"><rect width="40" height="40" fill="#3b4a86"/><rect y="26" width="40" height="14" fill="#3a3420"/><ellipse cx="20" cy="16" rx="17" ry="12" fill="#b39a36"/><ellipse cx="14" cy="13" rx="8" ry="6" fill="#d9c45a"/><ellipse cx="27" cy="17" rx="8" ry="6" fill="#c9b04a"/><path d="M18 18 L22 18 L24 36 H17 Z" fill="#5a4a26"/><rect y="34" width="40" height="6" fill="#23221e"/><ellipse cx="30" cy="33" rx="4" ry="1.500" fill="#d8d8e8"/></g></svg></div><div class="w" style="left:39px;top:443.25px;font-size:8px;color:#1c1c1c"><span style="font-size:8.600px;letter-spacing:-0.15px">192502829+</span>丁海涛</div><div class="abs" style="left:209px;top:440.95px"><svg width="10" height="12" viewBox="0 0 10 12"><rect x="3.200" y="0.600" width="3.600" height="6.200" rx="1.800" fill="#cfd2d6"/><path d="M1.700 5.300 C1.700 9.500 8.300 9.500 8.300 5.300" fill="none" stroke="#cfd2d6" stroke-width="0.8"/><path d="M5 8.600 V10.800 M3.200 11 H6.800" stroke="#cfd2d6" stroke-width="0.9"/><path d="M0.300 10.400 L9.600 1.800" stroke="#ff6f66" stroke-width="0.9"/></svg></div><div class="abs" style="left:224px;top:442.45px"><svg width="11" height="9" viewBox="0 0 11 9"><rect x="0.800" y="1.900" width="6.200" height="5.200" rx="0.500" fill="#cfd2d6"/><path d="M7.900 4.500 L10.700 2.100 V6.900 Z" fill="#cfd2d6"/><path d="M0.300 8.400 L7.900 1.100" stroke="#ff6f66" stroke-width="0.9"/></svg></div><div class="abs" style="left:12.8px;top:466.10px;width:20px;height:20px;border-radius:50%;overflow:hidden"><svg width="20" height="20" viewBox="0 0 40 40"><g filter="url(#avb2)"><rect width="40" height="40" fill="#fff"/><path d="M4 16 L36 14 L33 28 L8 29 Z" fill="#dfe4e2"/><path d="M6 20 L12 12 L16 17 L22 10 L28 16 L34 12 L35 24 L6 26 Z" fill="#eceee9"/><path d="M8 27 L33 26 L30 31 L11 32 Z" fill="#e3c9a4"/><ellipse cx="14" cy="18" rx="3" ry="3.500" fill="#9fc8c4"/><ellipse cx="26" cy="17" rx="3" ry="3" fill="#e3b39a"/><path d="M18 20 H24 V26 H18 Z" fill="#c9d6d6"/><path d="M30 14 L33 9 L34 15 Z" fill="#d98a7a"/></g></svg></div><div class="w" style="left:39px;top:472.40px;font-size:8px;color:#1c1c1c"><span style="font-size:8.600px;letter-spacing:-0.15px">192502846</span>张欣</div><div class="abs" style="left:209px;top:470.10px"><svg width="10" height="12" viewBox="0 0 10 12"><rect x="3.200" y="0.600" width="3.600" height="6.200" rx="1.800" fill="#cfd2d6"/><path d="M1.700 5.300 C1.700 9.500 8.300 9.500 8.300 5.300" fill="none" stroke="#cfd2d6" stroke-width="0.8"/><path d="M5 8.600 V10.800 M3.200 11 H6.800" stroke="#cfd2d6" stroke-width="0.9"/><path d="M0.300 10.400 L9.600 1.800" stroke="#ff6f66" stroke-width="0.9"/></svg></div><div class="abs" style="left:224px;top:471.60px"><svg width="11" height="9" viewBox="0 0 11 9"><rect x="0.800" y="1.900" width="6.200" height="5.200" rx="0.500" fill="#cfd2d6"/><path d="M7.900 4.500 L10.700 2.100 V6.900 Z" fill="#cfd2d6"/><path d="M0.300 8.400 L7.900 1.100" stroke="#ff6f66" stroke-width="0.9"/></svg></div><div class="abs" style="left:12.8px;top:495.25px;width:20px;height:20px;border-radius:50%;overflow:hidden"><svg width="20" height="20" viewBox="0 0 40 40"><g filter="url(#avb2)"><rect width="40" height="40" fill="#eba04c"/><path d="M0 0 H16 L10 14 L0 18 Z" fill="#f3c27a"/><path d="M8 12 C14 4 30 6 32 14 C38 18 36 30 28 32 L22 40 H10 C4 34 2 20 8 12 Z" fill="#f6ded4"/><path d="M12 8 L16 3 L19 9 Z" fill="#e78a3a"/><path d="M26 8 L32 5 L31 13 Z" fill="#e78a3a"/><path d="M14 10 C20 6 28 8 30 14 C26 12 18 12 14 10 Z" fill="#ee9a48"/><ellipse cx="20" cy="17" rx="1.200" ry="1" fill="#3a2a2a"/><ellipse cx="27" cy="18" rx="1.200" ry="1" fill="#3a2a2a"/><ellipse cx="9" cy="22" rx="5" ry="8" fill="#f0c0b4"/><path d="M28 28 L40 24 V40 H26 Z" fill="#e8903e"/></g></svg></div><div class="w" style="left:39px;top:501.55px;font-size:8px;color:#1c1c1c"><span style="font-size:8.600px;letter-spacing:-0.15px">192502862</span>廖黄炜</div><div class="abs" style="left:209px;top:499.25px"><svg width="10" height="12" viewBox="0 0 10 12"><rect x="3.200" y="0.600" width="3.600" height="6.200" rx="1.800" fill="#cfd2d6"/><path d="M1.700 5.300 C1.700 9.500 8.300 9.500 8.300 5.300" fill="none" stroke="#cfd2d6" stroke-width="0.8"/><path d="M5 8.600 V10.800 M3.200 11 H6.800" stroke="#cfd2d6" stroke-width="0.9"/><path d="M0.300 10.400 L9.600 1.800" stroke="#ff6f66" stroke-width="0.9"/></svg></div><div class="abs" style="left:224px;top:500.75px"><svg width="11" height="9" viewBox="0 0 11 9"><rect x="0.800" y="1.900" width="6.200" height="5.200" rx="0.500" fill="#cfd2d6"/><path d="M7.900 4.500 L10.700 2.100 V6.900 Z" fill="#cfd2d6"/><path d="M0.300 8.400 L7.900 1.100" stroke="#ff6f66" stroke-width="0.9"/></svg></div><div class="abs" style="left:12.8px;top:524.40px;width:20px;height:20px;border-radius:50%;overflow:hidden"><svg width="20" height="20" viewBox="0 0 40 40"><g filter="url(#avb2)"><rect width="40" height="40" fill="#2f4a2c"/><rect y="30" width="40" height="10" fill="#4a6a3c"/><ellipse cx="8" cy="10" rx="8" ry="8" fill="#3c5c36"/><path d="M10 22 C12 14 28 14 30 22 L33 36 H7 Z" fill="#efefec"/><path d="M14 10 C14 2 26 2 26 10 L27 20 C23 17 17 17 13 20 Z" fill="#181616"/><path d="M6 28 L12 24 L14 34 L8 36 Z" fill="#d8d6cf"/><path d="M34 28 L28 24 L26 34 L32 36 Z" fill="#d8d6cf"/><path d="M15 28 H25 V36 H15 Z" fill="#dcdad2"/></g></svg></div><div class="w" style="left:39px;top:530.70px;font-size:8px;color:#1c1c1c"><span style="font-size:8.600px;letter-spacing:-0.15px">200152107</span>杨蕾冉</div><div class="abs" style="left:209px;top:528.40px"><svg width="10" height="12" viewBox="0 0 10 12"><rect x="3.200" y="0.600" width="3.600" height="6.200" rx="1.800" fill="#cfd2d6"/><path d="M1.700 5.300 C1.700 9.500 8.300 9.500 8.300 5.300" fill="none" stroke="#cfd2d6" stroke-width="0.8"/><path d="M5 8.600 V10.800 M3.200 11 H6.800" stroke="#cfd2d6" stroke-width="0.9"/><path d="M0.300 10.400 L9.600 1.800" stroke="#ff6f66" stroke-width="0.9"/></svg></div><div class="abs" style="left:224px;top:529.90px"><svg width="11" height="9" viewBox="0 0 11 9"><rect x="0.800" y="1.900" width="6.200" height="5.200" rx="0.500" fill="#cfd2d6"/><path d="M7.900 4.500 L10.700 2.100 V6.900 Z" fill="#cfd2d6"/><path d="M0.300 8.400 L7.900 1.100" stroke="#ff6f66" stroke-width="0.9"/></svg></div><div class="abs" style="left:12.8px;top:553.55px;width:20px;height:20px;border-radius:50%;overflow:hidden"><svg width="20" height="20" viewBox="0 0 40 40"><g filter="url(#avb2)"><rect width="40" height="40" fill="#c4cbe0"/><path d="M0 0 H40 V8 H0 Z" fill="#aab4d2"/><path d="M9 16 C8 4 32 4 31 16 L32 22 L8 22 Z" fill="#2a2c3e"/><ellipse cx="20" cy="20" rx="9.500" ry="8" fill="#f4e0d4"/><path d="M9 18 C12 8 28 8 31 18 C28 14 24 16 20 14 C16 16 12 14 9 18 Z" fill="#2a2c3e"/><path d="M2 27 L38 25 L39 33 L1 35 Z" fill="#e9dcc4"/><path d="M1 35 L39 33 V40 H1 Z" fill="#7f8aae"/><path d="M6 27 L14 24 L16 28 Z" fill="#f4e0d4"/></g></svg></div><div class="w" style="left:39px;top:559.85px;font-size:8px;color:#1c1c1c"><span style="font-size:8.600px;letter-spacing:-0.15px">200153769</span>刘一博</div><div class="abs" style="left:209px;top:557.55px"><svg width="10" height="12" viewBox="0 0 10 12"><rect x="3.200" y="0.600" width="3.600" height="6.200" rx="1.800" fill="#cfd2d6"/><path d="M1.700 5.300 C1.700 9.500 8.300 9.500 8.300 5.300" fill="none" stroke="#cfd2d6" stroke-width="0.8"/><path d="M5 8.600 V10.800 M3.200 11 H6.800" stroke="#cfd2d6" stroke-width="0.9"/><path d="M0.300 10.400 L9.600 1.800" stroke="#ff6f66" stroke-width="0.9"/></svg></div><div class="abs" style="left:224px;top:559.05px"><svg width="11" height="9" viewBox="0 0 11 9"><rect x="0.800" y="1.900" width="6.200" height="5.200" rx="0.500" fill="#cfd2d6"/><path d="M7.900 4.500 L10.700 2.100 V6.900 Z" fill="#cfd2d6"/><path d="M0.300 8.400 L7.900 1.100" stroke="#ff6f66" stroke-width="0.9"/></svg></div><div class="abs" style="left:12.8px;top:582.70px;width:20px;height:20px;border-radius:50%;overflow:hidden"><svg width="20" height="20" viewBox="0 0 40 40"><g filter="url(#avb2)"><rect width="40" height="40" fill="#1f1f1f"/><ellipse cx="20" cy="12" rx="14" ry="12" fill="#2c2c2c"/><path d="M4 40 C6 26 14 24 20 24 C26 24 34 26 36 40 Z" fill="#0e0e0e"/><ellipse cx="20" cy="15" rx="5" ry="6.500" fill="#c49c88"/><path d="M14.500 13 C14 6 26 6 25.500 13 C23 10 17 10 14.500 13 Z" fill="#121010"/><path d="M17 21 H23 L22 26 H18 Z" fill="#b48c78"/></g></svg></div><div class="w" style="left:39px;top:589.00px;font-size:8px;color:#1c1c1c"><span style="font-size:8.600px;letter-spacing:-0.15px">202200825</span>张正骁</div><div class="abs" style="left:209px;top:586.70px"><svg width="10" height="12" viewBox="0 0 10 12"><rect x="3.200" y="0.600" width="3.600" height="6.200" rx="1.800" fill="#cfd2d6"/><path d="M1.700 5.300 C1.700 9.500 8.300 9.500 8.300 5.300" fill="none" stroke="#cfd2d6" stroke-width="0.8"/><path d="M5 8.600 V10.800 M3.200 11 H6.800" stroke="#cfd2d6" stroke-width="0.9"/><path d="M0.300 10.400 L9.600 1.800" stroke="#ff6f66" stroke-width="0.9"/></svg></div><div class="abs" style="left:224px;top:588.20px"><svg width="11" height="9" viewBox="0 0 11 9"><rect x="0.800" y="1.900" width="6.200" height="5.200" rx="0.500" fill="#cfd2d6"/><path d="M7.900 4.500 L10.700 2.100 V6.900 Z" fill="#cfd2d6"/><path d="M0.300 8.400 L7.900 1.100" stroke="#ff6f66" stroke-width="0.9"/></svg></div><div class="abs" style="left:12.8px;top:611.85px;width:20px;height:20px;border-radius:50%;overflow:hidden"><svg width="20" height="20" viewBox="0 0 40 40"><g filter="url(#avb2)"><rect width="40" height="40" fill="#c89a56"/><path d="M0 0 H14 L8 20 L0 24 Z" fill="#e9d9c4"/><path d="M30 0 H40 V20 L34 14 Z" fill="#dcc4a4"/><path d="M6 14 L10 4 L16 9 L26 8 L32 2 L35 14 C38 26 30 36 20 36 C10 36 3 26 6 14 Z" fill="#d89a48"/><path d="M13 22 C15 16 27 16 29 22 C30 30 26 34 21 34 C16 34 12 30 13 22 Z" fill="#f4e6d2"/><ellipse cx="21" cy="24" rx="2" ry="1.400" fill="#1a1414"/><ellipse cx="14" cy="17" rx="1.200" ry="1" fill="#1a1414"/><ellipse cx="27" cy="17" rx="1.200" ry="1" fill="#1a1414"/><path d="M8 34 C14 30 28 30 34 36 V40 H8 Z" fill="#1c1a1a"/><path d="M0 26 L6 24 L8 40 H0 Z" fill="#d86a7a"/></g></svg></div><div class="w" style="left:39px;top:618.15px;font-size:8px;color:#1c1c1c"><span style="font-size:8.600px;letter-spacing:-0.15px">202200833_</span>胡天乐</div><div class="abs" style="left:209px;top:615.85px"><svg width="10" height="12" viewBox="0 0 10 12"><rect x="3.200" y="0.600" width="3.600" height="6.200" rx="1.800" fill="#cfd2d6"/><path d="M1.700 5.300 C1.700 9.500 8.300 9.500 8.300 5.300" fill="none" stroke="#cfd2d6" stroke-width="0.8"/><path d="M5 8.600 V10.800 M3.200 11 H6.800" stroke="#cfd2d6" stroke-width="0.9"/><path d="M0.300 10.400 L9.600 1.800" stroke="#ff6f66" stroke-width="0.9"/></svg></div><div class="abs" style="left:224px;top:617.35px"><svg width="11" height="9" viewBox="0 0 11 9"><rect x="0.800" y="1.900" width="6.200" height="5.200" rx="0.500" fill="#cfd2d6"/><path d="M7.900 4.500 L10.700 2.100 V6.900 Z" fill="#cfd2d6"/><path d="M0.300 8.400 L7.900 1.100" stroke="#ff6f66" stroke-width="0.9"/></svg></div><div class="abs" style="left:0;top:630px;width:249px;height:39px;background:#fff;border-top:1px solid #ececec"></div><div class="abs" style="left:34.5px;top:641px;width:50.500px;height:17.500px;background:#0a6cff;border-radius:1.500px;color:#fff;font-size:8px;line-height:17.500px;text-align:center">全体静音</div><div class="abs" style="left:95px;top:641px;width:58.500px;height:17.500px;background:#fff;border:1px solid #dcdde0;border-radius:1.500px;color:#0a6cff;font-size:8px;line-height:15.500px;text-align:center">解除全体静音</div><div class="abs" style="left:164px;top:641px;width:48px;height:17.500px;background:#fff;border:1px solid #dcdde0;border-radius:1.500px;color:#0a6cff;font-size:8px;line-height:15.500px;text-align:center;padding-right:9px">更多</div><svg class="abs" style="left:195px;top:648px" width="5" height="4" viewBox="0 0 5 4"><path d="M0.5 0.5 H4.500 L2.500 3.400 Z" fill="#0a6cff"/></svg><div class="abs" style="left:60.7px;top:93.4px;width:161.200px;height:23.300px;border-radius:3px;background:#383b40"></div><div class="abs" style="left:68.5px;top:98.8px"><svg width="10" height="12" viewBox="0 0 10 12"><rect x="3.200" y="0.600" width="3.600" height="6.200" rx="1.800" fill="#7d8085"/><path d="M1.700 5.300 C1.700 9.500 8.300 9.500 8.300 5.300" fill="none" stroke="#7d8085" stroke-width="0.8"/><path d="M5 8.600 V10.800 M3.200 11 H6.800" stroke="#7d8085" stroke-width="0.9"/><path d="M0.300 10.400 L9.600 1.800" stroke="#ff6f66" stroke-width="0.9"/></svg></div><div class="abs" style="left:84px;top:95.5px;width:1px;height:19px;background:#45484d"></div><div class="w" style="left:89px;top:102.3px;font-size:8px;color:#fff">正在讲话: 任肖强;</div><svg class="abs" style="left:160px;top:97.5px" width="32" height="16" viewBox="0 0 32 16"><defs><linearGradient id="tg1" x1="0" y1="1" x2="1" y2="0"><stop offset="0.15" stop-color="#5a5d62"/><stop offset="0.9" stop-color="#3e4146"/></linearGradient></defs><path d="M0.900 10.400 L11.300 0.100 L16 5 L5.900 15.500 Z" fill="url(#tg1)"/><path d="M11.600 10.400 L22.300 -0.300 L31.400 10.100 L27.600 15.500 L22.300 10.800 L16.300 15.500 Z" fill="url(#tg1)"/></svg></div><div class="abs" style="left:0;top:107px;width:1022px;height:1px;background:#1b1c1e"></div><div class="abs" style="left:0;top:108px;width:1022px;height:1px;background:rgba(27,28,30,.7)"></div><svg class="abs" style="left:621px;top:652px" width="270" height="14" viewBox="0 0 270 14"><g fill="#c3c3e3" stroke="none"><path d="M7 4 L3 6.800 L7 9.600 Z"/><path d="M32 4 L36 6.800 L32 9.600 Z"/><path d="M52 4 L48 6.800 L52 9.600 Z"/><path d="M79 4 L83 6.800 L79 9.600 Z"/><path d="M97 4 L93 6.800 L97 9.600 Z"/><path d="M123 4 L127 6.800 L123 9.600 Z"/><path d="M142 4 L138 6.800 L142 9.600 Z"/><path d="M168 4 L172 6.800 L168 9.600 Z"/></g><g fill="none" stroke="#c3c3e3" stroke-width="1"><rect x="16" y="4" width="8.500" height="5.600"/><rect x="59" y="5.500" width="8" height="5"/><path d="M61 5.500 V3.500 H69.500 V8.500 H67"/><path d="M106 3.500 H114 M107.500 5.700 H112.500 M106 7.900 H114 M107.500 10.100 H112.500"/><path d="M151 3.500 H159 M152.500 5.700 H157.500 M151 7.900 H159 M152.500 10.100 H157.500"/><path d="M197 3.500 H205 M198.500 5.700 H203.500 M197 7.900 H205 M198.500 10.100 H203.500"/><path d="M229 5 C232 1.500 237 4 236 8 C235.500 10 234 11 232.500 11 M228.500 2.500 V5.800 H232"/><circle cx="245" cy="5.800" r="2.600"/><path d="M247 7.800 L250 11"/><path d="M263.500 5 C260.500 1.500 255.500 4 256.500 8 C257 10 258.500 11 260 11 M264 2.500 V5.800 H260.500"/></g></svg><svg class="abs" style="left:373px;top:429px" width="9" height="14" viewBox="0 0 9 14"><path d="M4.500 2 V12.500 M1.500 12.500 H4 M5 12.500 H7.500 M2 1.500 H4 M5 1.500 H7" stroke="#2a2a2a" stroke-width="1" fill="none"/></svg><div id="desk" class="abs"></div><div class="abs" style="left:0;top:685px;width:28px;height:4px;background:#4b3a2d"></div><div class="abs" style="left:28px;top:685px;width:228px;height:4px;background:#f2f2f2"></div><div class="abs" style="left:256px;top:685px;width:766px;height:4px;background:#46392b"></div><div class="abs" style="left:520px;top:685px;width:31px;height:4px;background:#6f6a64"></div><div class="abs" style="left:1022px;top:685px;width:246px;height:4px;background:#2e2419"></div><div class="abs" style="left:1268px;top:0;width:3px;height:689px;background:#fff"></div><div class="abs" style="left:0;top:670px;width:125px;height:15.500px;background:#0b0b0c"></div><div class="abs" style="left:0;top:670px;width:13px;height:16px;background:#0a6cff"></div><svg class="abs" style="left:1.500px;top:672.500px" width="10" height="10" viewBox="0 0 10 10"><circle cx="5" cy="2.900" r="2.100" fill="#fff"/><path d="M0.500 9.600 C0.700 6.600 2.600 5.600 5 5.600 C7.400 5.600 9.300 6.600 9.500 9.600 Z" fill="#fff"/></svg><svg class="abs" style="left:14.500px;top:673px" width="10" height="10" viewBox="0 0 10 10"><rect x="0.300" y="0.300" width="9.400" height="6.600" rx="0.800" fill="#fff"/><path d="M3 8.800 H7" stroke="#fff" stroke-width="1.100"/><path d="M3 5 C3.600 3.400 4.800 2.900 6 2.900 V1.900 L7.800 3.500 L6 5 V4 C4.800 4 3.800 4.200 3 5 Z" fill="#222"/></svg><svg class="abs" style="left:26px;top:672.500px" width="8" height="11" viewBox="0 0 8 11"><rect x="2" y="0.300" width="4" height="6.600" rx="2" fill="#3fe24a"/><path d="M0.700 5 C0.700 9.300 7.300 9.300 7.300 5" fill="none" stroke="#fff" stroke-width="0.900"/><path d="M4 8.300 V10.500" stroke="#fff" stroke-width="0.900"/></svg><span class="w" style="left:274.00px;top:283.22px;font-size:21.6px;letter-spacing:-0.310px;color:#3333b0;">Reinforcement</span><span class="w" style="left:420.30px;top:283.22px;font-size:21.6px;letter-spacing:-0.362px;color:#3333b0;">Learning</span><span class="w" style="left:511.20px;top:283.22px;font-size:21.6px;letter-spacing:0.136px;color:#3333b0;">with</span><span class="w" style="left:561.00px;top:283.22px;font-size:21.6px;letter-spacing:0.000px;color:#3333b0;font-style:italic;">a</span><span class="w" style="left:580.60px;top:283.22px;font-size:21.6px;letter-spacing:-0.318px;color:#3333b0;font-style:italic;">Priori</span><span class="w" style="left:641.40px;top:283.22px;font-size:21.6px;letter-spacing:-0.443px;color:#3333b0;">Knowledge</span><span class="w" style="left:450.00px;top:369.57px;font-size:17.4px;letter-spacing:0.477px;color:#000;">Xiaoqiang</span><span class="w" style="left:538.00px;top:369.57px;font-size:17.4px;letter-spacing:-0.615px;color:#000;">Ren</span><span class="w" style="left:365.90px;top:423.12px;font-size:12.5px;letter-spacing:-0.169px;color:#000;">School</span><span class="w" style="left:407.90px;top:423.12px;font-size:12.5px;letter-spacing:-1.052px;color:#000;">of</span><span class="w" style="left:422.30px;top:423.12px;font-size:12.5px;letter-spacing:0.157px;color:#000;">Mechatronic</span><span class="w" style="left:496.60px;top:423.12px;font-size:12.5px;letter-spacing:-0.157px;color:#000;">Engineering</span><span class="w" style="left:567.20px;top:423.12px;font-size:12.5px;letter-spacing:-1.102px;color:#000;">and</span><span class="w" style="left:592.50px;top:423.12px;font-size:12.5px;letter-spacing:0.124px;color:#000;">Automation</span><span class="w" style="left:454.40px;top:443.72px;font-size:12.5px;letter-spacing:-0.293px;color:#000;">Shanghai</span><span class="w" style="left:511.00px;top:443.72px;font-size:12.5px;letter-spacing:-0.269px;color:#000;">University</span><span class="w" style="left:429.60px;top:491.27px;font-size:17.4px;letter-spacing:0.096px;color:#000;">November</span><span class="w" style="left:518.90px;top:491.27px;font-size:17.4px;letter-spacing:-0.072px;color:#000;">19,</span><span class="w" style="left:551.00px;top:491.27px;font-size:17.4px;letter-spacing:-0.305px;color:#000;">2021</span><span class="w" style="left:199.90px;top:672.62px;font-size:9.9px;letter-spacing:0.421px;color:#fff;">Xiaoqiang</span><span class="w" style="left:250.90px;top:672.62px;font-size:9.9px;letter-spacing:-0.162px;color:#fff;">Ren</span><span class="w" style="left:276.40px;top:672.62px;font-size:9.9px;letter-spacing:0.716px;color:#fff;">(SHU)</span><span class="w" style="left:444.50px;top:672.62px;font-size:9.9px;letter-spacing:-1.331px;color:#fff;">RL</span><span class="w" style="left:462.00px;top:672.62px;font-size:9.9px;letter-spacing:0.277px;color:#fff;">with</span><span class="w" style="left:485.60px;top:672.62px;font-size:9.9px;letter-spacing:0.000px;color:#fff;font-style:italic;">a</span><span class="w" style="left:495.20px;top:672.62px;font-size:9.9px;letter-spacing:0.490px;color:#fff;font-style:italic;">Priori</span><span class="w" style="left:740.60px;top:672.59px;font-size:9.7px;letter-spacing:0.091px;color:#ececfa;">November</span><span class="w" style="left:792.30px;top:672.59px;font-size:9.7px;letter-spacing:0.112px;color:#ececfa;">19,</span><span class="w" style="left:809.80px;top:672.59px;font-size:9.7px;letter-spacing:0.012px;color:#ececfa;">2021</span><span class="w" style="left:859.20px;top:672.59px;font-size:9.7px;letter-spacing:0.000px;color:#ececfa;">1</span><span class="w" style="left:865.70px;top:671.91px;font-size:10.5px;letter-spacing:0.000px;color:#ececfa;">/</span><span class="w" style="left:873.40px;top:672.59px;font-size:9.7px;letter-spacing:0.412px;color:#ececfa;">46</span><span class="w" style="left:36.30px;top:673.41px;font-size:10.5px;letter-spacing:0.057px;color:#fff;font-family:"Liberation Sans","Noto Sans CJK SC",sans-serif;">任肖强的屏幕共享</span><div class="abs" style="left:511px;top:673px;width:114.500px;height:11px;background:#fff;border:1px solid #6a6a6a"></div><div class="w" style="left:514.300px;top:674.600px;font-size:8px;color:#333">青年论坛新闻稿<span style="letter-spacing:.1px">.docx - Word</span></div>
</div>
</body>
</html>
